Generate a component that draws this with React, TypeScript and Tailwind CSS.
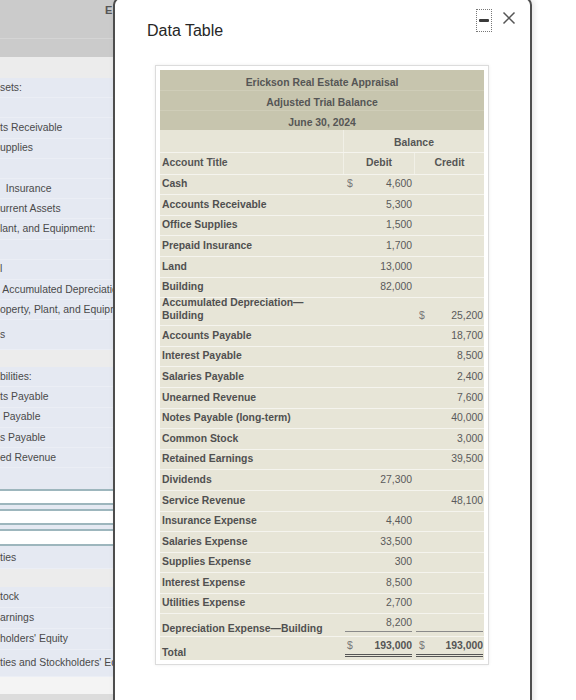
import React from "react";

type Row = {
  title: string;
  debit?: string;
  credit?: string;
  debitSign?: boolean;
  creditSign?: boolean;
  tall?: boolean;
};

const rows: Row[] = [
  { title: "Cash", debit: "4,600", debitSign: true },
  { title: "Accounts Receivable", debit: "5,300" },
  { title: "Office Supplies", debit: "1,500" },
  { title: "Prepaid Insurance", debit: "1,700" },
  { title: "Land", debit: "13,000" },
  { title: "Building", debit: "82,000" },
  { title: "Accumulated Depreciation—\nBuilding", credit: "25,200", creditSign: true, tall: true },
  { title: "Accounts Payable", credit: "18,700" },
  { title: "Interest Payable", credit: "8,500" },
  { title: "Salaries Payable", credit: "2,400" },
  { title: "Unearned Revenue", credit: "7,600" },
  { title: "Notes Payable (long-term)", credit: "40,000" },
  { title: "Common Stock", credit: "3,000" },
  { title: "Retained Earnings", credit: "39,500" },
  { title: "Dividends", debit: "27,300" },
  { title: "Service Revenue", credit: "48,100" },
  { title: "Insurance Expense", debit: "4,400" },
  { title: "Salaries Expense", debit: "33,500" },
  { title: "Supplies Expense", debit: "300" },
  { title: "Interest Expense", debit: "8,500" },
  { title: "Utilities Expense", debit: "2,700" },
];

// visible (clipped) labels of the page behind the dialog
const topLabels = [
  "sets:",
  "",
  "ts Receivable",
  "upplies",
  "",
  "  Insurance",
  "urrent Assets",
  "lant, and Equipment:",
  "",
  "l",
  " Accumulated Depreciation",
  "operty, Plant, and Equipment",
];

function SideRow({ text, h = "h-[20.2px]" }: { text: string; h?: string }) {
  return (
    <div className={`${h} flex items-center border-b border-[#ebeef5] whitespace-pre text-[10.4px] text-[#4a4a4a]`}>
      {text}
    </div>
  );
}

function BackPage() {
  return (
    <div className="w-[140px] h-[700px] overflow-hidden flex flex-col font-['Liberation_Sans',Arial,sans-serif]">
      <div className="h-[57px] bg-[#cbcbcb] flex flex-col">
        <div className="h-[38px] pl-[105px] pt-[2px] text-[11px] font-bold text-[#555]">E</div>
        <div className="flex-1 border-t border-[#d5d5d5]" />
      </div>
      <div className="h-[21px] bg-[#ececec]" />
      <div className="bg-[#e5e9f2]">
        {topLabels.map((t, i) => (
          <SideRow key={i} text={t} />
        ))}
        <SideRow text="s" h="h-[30px]" />
      </div>
      <div className="h-[17px] bg-[#ececec]" />
      <div className="bg-[#e5e9f2]">
        <SideRow text="bilities:" />
        <SideRow text="ts Payable" />
        <SideRow text=" Payable" />
        <SideRow text="s Payable" />
        <SideRow text="ed Revenue" />
        <div className="h-[21px]" />
        <div className="flex flex-col gap-[4px] pb-[2px]">
          <div className="h-[16px] bg-white border-y-2 border-[#9db6bd]" />
          <div className="h-[16px] bg-white border-y-2 border-[#9db6bd]" />
          <div className="h-[17px] bg-white border-y-2 border-[#9db6bd]" />
        </div>
        <SideRow text="ties" h="h-[21px]" />
      </div>
      <div className="h-[18px] bg-[#ececec]" />
      <div className="bg-[#e5e9f2]">
        <SideRow text="tock" h="h-[21px]" />
        <SideRow text="arnings" h="h-[21px]" />
        <SideRow text="holders' Equity" h="h-[21px]" />
        <SideRow text="ties and Stockholders' Equity" h="h-[27px]" />
      </div>
      <div className="h-[17px] bg-[#f4f4f4]" />
      <div className="flex-1 bg-[#dcdcdc]" />
    </div>
  );
}

function DataRow({ r }: { r: Row }) {
  return (
    <div
      className={`${r.tall ? "h-[28px] leading-[13px]" : "h-[20.6px] leading-[14px]"} flex items-end border-t-[1.5px] border-[#f5f4ee] bg-[#e7e5d7] pb-[3px]`}
    >
      <div className="w-[183px] pl-[2px] font-bold text-[#505050] whitespace-pre">{r.title}</div>
      <div className="w-[71px] flex justify-between pl-[4px] pr-[2px] text-[#5a5a5a]">
        <span className="text-[#777]">{r.debitSign ? "$" : ""}</span>
        <span>{r.debit ?? ""}</span>
      </div>
      <div className="w-[70px] flex justify-between pl-[5px] pr-[1px] text-[#5a5a5a]">
        <span className="text-[#777]">{r.creditSign ? "$" : ""}</span>
        <span>{r.credit ?? ""}</span>
      </div>
    </div>
  );
}

function TrialBalance() {
  return (
    <div className="ml-[40px] w-[334px] border border-[#dcdcdc] px-[4px] pt-[4px] pb-[4px] shadow-[0_0_3px_rgba(0,0,0,0.08)] text-[10.4px]">
      <div className="bg-[#c7c5ae] font-bold text-[#555]">
        <div className="h-[20px] flex items-end justify-center pb-[0px] leading-[14px]">
          Erickson Real Estate Appraisal
        </div>
        <div className="h-[20px] flex items-end justify-center pb-[0px] leading-[14px] border-t border-[#cfcdb8]">
          Adjusted Trial Balance
        </div>
        <div className="h-[20px] flex items-end justify-center pb-[0px] leading-[14px] border-t border-[#cfcdb8]">
          June 30, 2024
        </div>
      </div>
      <div className="h-[22px] flex bg-[#e7e5d7] font-bold text-[#555] leading-[14px]">
        <div className="w-[183px]" />
        <div className="flex-1 flex items-end justify-center pb-[2px] border-l border-[#f1f0e7]">Balance</div>
      </div>
      <div className="h-[21.6px] flex bg-[#e7e5d7] font-bold text-[#555] leading-[14px] border-t-[1.5px] border-[#f5f4ee]">
        <div className="w-[183px] flex items-end pb-[4px] pl-[2px]">Account Title</div>
        <div className="w-[71px] flex items-end justify-center pb-[4px] border-l border-[#f1f0e7]">Debit</div>
        <div className="w-[70px] flex items-end justify-center pb-[4px] border-l border-[#f1f0e7]">Credit</div>
      </div>
      {rows.map((r) => (
        <DataRow key={r.title} r={r} />
      ))}
      <div className="h-[23px] flex items-end border-t-[1.5px] border-[#f5f4ee] bg-[#e7e5d7] leading-[14px]">
        <div className="w-[183px] pl-[2px] font-bold text-[#505050]">Depreciation Expense—Building</div>
        <div className="w-[71px] pl-[2px] pr-[2px] mb-[4px]">
          <div className="border-b border-[#8a8a8a] pb-[1px] text-right text-[#5a5a5a]">8,200</div>
        </div>
        <div className="w-[70px] pl-[2px] pr-[1px] mb-[4px]">
          <div className="border-b border-[#8a8a8a] pb-[1px] h-[16px]" />
        </div>
      </div>
      <div className="h-[24px] flex items-end border-t-[1.5px] border-[#f5f4ee] bg-[#e7e5d7] leading-[14px]">
        <div className="w-[183px] pl-[2px] font-bold text-[#505050]">Total</div>
        <div className="w-[71px] pl-[2px] pr-[2px] mb-[3px]">
          <div className="flex justify-between border-b-[3px] border-double border-[#555] pb-[1px] pl-[2px]">
            <span className="text-[#777]">$</span>
            <span className="font-bold text-[#555]">193,000</span>
          </div>
        </div>
        <div className="w-[70px] pl-[2px] pr-[1px] mb-[3px]">
          <div className="flex justify-between border-b-[3px] border-double border-[#555] pb-[1px] pl-[3px]">
            <span className="text-[#777]">$</span>
            <span className="font-bold text-[#555]">193,000</span>
          </div>
        </div>
      </div>
    </div>
  );
}

export default function App() {
  return (
    <div className="relative w-[576px] h-[700px] overflow-hidden bg-white font-['Liberation_Sans',Arial,sans-serif]">
      <BackPage />
      {/* dialog over the page */}
      <div className="absolute left-[113px] top-[-3px] w-[419px] h-[720px] bg-white border-2 border-[#4d4d4d] rounded-[8px] shadow-[2px_0_6px_rgba(0,0,0,0.12)]">
        <div className="relative h-[66px]">
          <div className="pl-[32px] pt-[22px] text-[16px] leading-[20px] text-[#262626]">Data Table</div>
          <div className="absolute left-[361px] top-[10px] w-[16px] h-[23px] border border-dotted border-[#777] flex items-center justify-center">
            <div className="w-[10px] h-[3px] rounded-[1px] bg-[#3a3a3a]" />
          </div>
          <svg className="absolute left-[387px] top-[12px]" width="14" height="14" viewBox="0 0 14 14">
            <path d="M1.5 1.5 L12.5 12.5 M12.5 1.5 L1.5 12.5" stroke="#555" strokeWidth="1.5" fill="none" />
          </svg>
        </div>
        <TrialBalance />
      </div>
    </div>
  );
}
